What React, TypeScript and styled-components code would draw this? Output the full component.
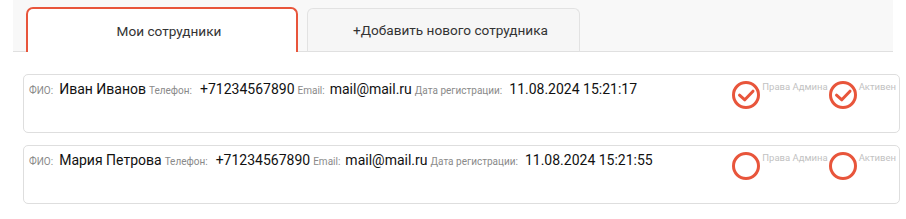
import React from "react";
import styled, { createGlobalStyle } from "styled-components";

const GlobalStyle = createGlobalStyle`
  body {
    margin: 0;
    background: #fff;
    font-family: Roboto, "Noto Sans", Arial, sans-serif;
  }
`;

const ACCENT = "#e8553b";

const Page = styled.div`
  width: 906px;
  height: 219px;
  overflow: hidden;
`;

const TabBar = styled.div`
  margin-left: 13px;
  width: 880px;
  height: 52px;
  box-sizing: border-box;
  padding-left: 13px;
  background: #f8f8f8;
  border-bottom: 1px solid #e0e0e0;
  display: flex;
  align-items: flex-end;
  gap: 9px;
`;

const Tab = styled.div<{ $active?: boolean }>`
  box-sizing: border-box;
  width: ${p => (p.$active ? 272 : 273)}px;
  height: ${p => (p.$active ? 45 : 44)}px;
  margin-bottom: -1px;
  display: flex;
  align-items: center;
  justify-content: center;
  padding-top: ${p => (p.$active ? 1 : 0)}px;
  padding-left: 14px;
  font-size: 13.6px;
  color: #333;
  background: ${p => (p.$active ? "#fff" : "#f6f6f6")};
  border: ${p => (p.$active ? `2px solid ${ACCENT}` : "1px solid #e2e2e2")};
  border-bottom: ${p => (p.$active ? "none" : "1px solid #e0e0e0")};
  border-radius: ${p => (p.$active ? "7px 7px 0 0" : "6px 6px 0 0")};
`;

const List = styled.div`
  margin: 22px 6px 0 23px;
  display: flex;
  flex-direction: column;
  gap: 12px;
`;

const Card = styled.div`
  box-sizing: border-box;
  height: 59px;
  border: 1px solid #dedede;
  border-radius: 5px;
  padding: 6px 2px 0 5px;
  display: flex;
  justify-content: space-between;
  align-items: flex-start;
`;

const Info = styled.div`
  display: flex;
  align-items: baseline;
  white-space: nowrap;
  line-height: 16px;
`;

const Label = styled.span`
  font-size: 10px;
  color: #8a8a8a;
`;

const Value = styled.span<{ $gap: number }>`
  font-size: 14px;
  color: #111;
  margin-left: ${p => p.$gap}px;
  margin-right: 3px;
`;

const Flags = styled.div`
  display: flex;
  align-items: flex-start;
`;

const Flag = styled.div`
  display: flex;
  align-items: flex-start;
`;

const FlagLabel = styled.span`
  font-size: 9.5px;
  line-height: 12px;
  color: #c2c2c2;
  margin-left: 2px;
  margin-right: 1px;
`;

const CheckBox = styled.svg`
  display: block;
  flex: none;
`;

const CheckIcon: React.FC<{ checked: boolean }> = ({ checked }) => (
  <CheckBox width="28" height="28" viewBox="0 0 28 28">
    <circle cx="14" cy="14" r="12.5" fill="none" stroke={ACCENT} strokeWidth="3" />
    {checked && (
      <path
        d="M7.5 14.2 L12.8 18.8 L21 10.2"
        fill="none"
        stroke={ACCENT}
        strokeWidth="3"
        strokeLinecap="round"
        strokeLinejoin="round"
      />
    )}
  </CheckBox>
);

type Employee = {
  name: string;
  phone: string;
  email: string;
  registered: string;
  admin: boolean;
  active: boolean;
};

const employees: Employee[] = [
  {
    name: "Иван Иванов",
    phone: "+71234567890",
    email: "mail@mail.ru",
    registered: "11.08.2024 15:21:17",
    admin: true,
    active: true
  },
  {
    name: "Мария Петрова",
    phone: "+71234567890",
    email: "mail@mail.ru",
    registered: "11.08.2024 15:21:55",
    admin: false,
    active: false
  }
];

export default function App() {
  return (
    <Page>
      <GlobalStyle />
      <TabBar>
        <Tab $active>Мои сотрудники</Tab>
        <Tab>+Добавить нового сотрудника</Tab>
      </TabBar>
      <List>
        {employees.map(emp => (
          <Card key={emp.registered}>
            <Info>
              <Label>ФИО:</Label>
              <Value $gap={6}>{emp.name}</Value>
              <Label>Телефон:</Label>
              <Value $gap={8}>{emp.phone}</Value>
              <Label>Email:</Label>
              <Value $gap={5}>{emp.email}</Value>
              <Label>Дата регистрации:</Label>
              <Value $gap={7}>{emp.registered}</Value>
            </Info>
            <Flags>
              <Flag>
                <CheckIcon checked={emp.admin} />
                <FlagLabel>Права Админа</FlagLabel>
              </Flag>
              <Flag>
                <CheckIcon checked={emp.active} />
                <FlagLabel>Активен</FlagLabel>
              </Flag>
            </Flags>
          </Card>
        ))}
      </List>
    </Page>
  );
}
